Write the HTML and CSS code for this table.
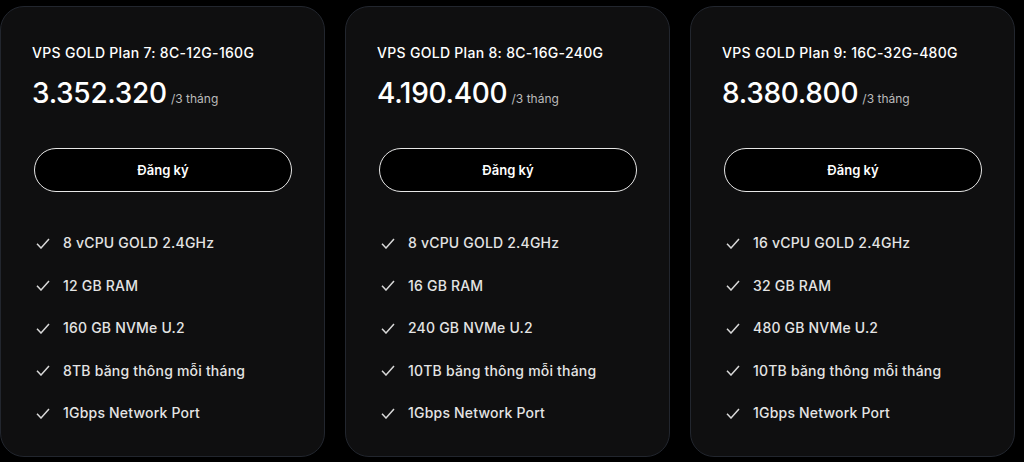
FILE: index.html
```html
<!doctype html>
<html lang="vi">
<head>
  <meta charset="UTF-8">
  <title>VPS GOLD</title>
  <link rel="stylesheet" href="styles.css">
</head>
<body>
<div class="plans">

  <div class="card">
    <h3 class="name">VPS GOLD Plan 7: 8C-12G-160G</h3>
    <p class="price">3.352.320 <span class="per">/3 tháng</span></p>
    <a class="btn" href="#">Đăng ký</a>
    <ul class="feats">
      <li><svg viewBox="0 0 14 11"><path d="M1 5.8 L5 10 L13 1"/></svg>8 vCPU GOLD 2.4GHz</li>
      <li><svg viewBox="0 0 14 11"><path d="M1 5.8 L5 10 L13 1"/></svg>12 GB RAM</li>
      <li><svg viewBox="0 0 14 11"><path d="M1 5.8 L5 10 L13 1"/></svg>160 GB NVMe U.2</li>
      <li><svg viewBox="0 0 14 11"><path d="M1 5.8 L5 10 L13 1"/></svg>8TB băng thông mỗi tháng</li>
      <li><svg viewBox="0 0 14 11"><path d="M1 5.8 L5 10 L13 1"/></svg>1Gbps Network Port</li>
    </ul>
  </div>

  <div class="card">
    <h3 class="name">VPS GOLD Plan 8: 8C-16G-240G</h3>
    <p class="price">4.190.400 <span class="per">/3 tháng</span></p>
    <a class="btn" href="#">Đăng ký</a>
    <ul class="feats">
      <li><svg viewBox="0 0 14 11"><path d="M1 5.8 L5 10 L13 1"/></svg>8 vCPU GOLD 2.4GHz</li>
      <li><svg viewBox="0 0 14 11"><path d="M1 5.8 L5 10 L13 1"/></svg>16 GB RAM</li>
      <li><svg viewBox="0 0 14 11"><path d="M1 5.8 L5 10 L13 1"/></svg>240 GB NVMe U.2</li>
      <li><svg viewBox="0 0 14 11"><path d="M1 5.8 L5 10 L13 1"/></svg>10TB băng thông mỗi tháng</li>
      <li><svg viewBox="0 0 14 11"><path d="M1 5.8 L5 10 L13 1"/></svg>1Gbps Network Port</li>
    </ul>
  </div>

  <div class="card">
    <h3 class="name">VPS GOLD Plan 9: 16C-32G-480G</h3>
    <p class="price">8.380.800 <span class="per">/3 tháng</span></p>
    <a class="btn" href="#">Đăng ký</a>
    <ul class="feats">
      <li><svg viewBox="0 0 14 11"><path d="M1 5.8 L5 10 L13 1"/></svg>16 vCPU GOLD 2.4GHz</li>
      <li><svg viewBox="0 0 14 11"><path d="M1 5.8 L5 10 L13 1"/></svg>32 GB RAM</li>
      <li><svg viewBox="0 0 14 11"><path d="M1 5.8 L5 10 L13 1"/></svg>480 GB NVMe U.2</li>
      <li><svg viewBox="0 0 14 11"><path d="M1 5.8 L5 10 L13 1"/></svg>10TB băng thông mỗi tháng</li>
      <li><svg viewBox="0 0 14 11"><path d="M1 5.8 L5 10 L13 1"/></svg>1Gbps Network Port</li>
    </ul>
  </div>

</div>
</body>
</html>
```

FILE: styles.css
```css
body {
  margin: 0;
  background: #000;
  font-family: "Inter", "Noto Sans", sans-serif;
  color: #fff;
}

.plans {
  display: flex;
  gap: 20px;
  padding-top: 6px;
}

.card {
  width: 325px;
  height: 451px;
  box-sizing: border-box;
  padding: 36px 33px 0;
  background: #0f0f10;
  border: 1px solid #22262e;
  border-radius: 24px;
}

.name {
  margin: 0 0 0 -2px;
  font-size: 14px;
  line-height: 20px;
  font-weight: 500;
  letter-spacing: 0.3px;
}

.price {
  margin: 12px 0 0 -2px;
  font-size: 28px;
  line-height: 36px;
  font-weight: 500;
  letter-spacing: -0.3px;
}

.per {
  font-size: 12px;
  color: #bbb;
  font-weight: 400;
  letter-spacing: 0;
  margin-left: -3px;
}

.btn {
  display: flex;
  align-items: center;
  justify-content: center;
  margin-top: 31px;
  height: 44px;
  width: 258px;
  box-sizing: border-box;
  border: 1.5px solid #e6e6e6;
  border-radius: 22px;
  background: #000;
  color: #fff;
  font-size: 13px;
  font-weight: 600;
  text-decoration: none;
}

.feats {
  list-style: none;
  margin: 41px 0 0;
  padding: 0;
  display: flex;
  flex-direction: column;
  gap: 22.5px;
}

.feats li {
  display: flex;
  align-items: center;
  font-size: 14px;
  line-height: 20px;
  font-weight: 500;
  color: #e4e4e4;
  letter-spacing: 0.2px;
}

.feats svg {
  width: 14px;
  height: 11px;
  margin: 0 13px 0 2px;
  fill: none;
  stroke: #d8d8d8;
  stroke-width: 1.5;
}
```
